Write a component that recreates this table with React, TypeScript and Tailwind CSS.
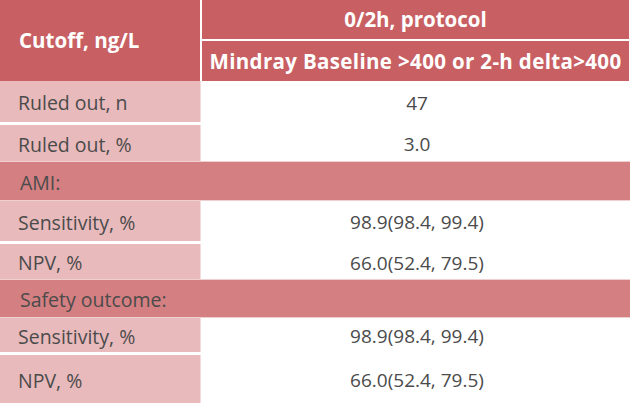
type Row =
  | { kind: "data"; label: string; value: string; h: string }
  | { kind: "band"; label: string; h: string }
  | { kind: "gap" };

const rows: Row[] = [
  { kind: "data", label: "Ruled out, n", value: "47", h: "h-[41px]" },
  { kind: "gap" },
  { kind: "data", label: "Ruled out, %", value: "3.0", h: "h-[36px]" },
  { kind: "band", label: "AMI:", h: "h-[40px]" },
  { kind: "data", label: "Sensitivity, %", value: "98.9(98.4, 99.4)", h: "h-[40px]" },
  { kind: "gap" },
  { kind: "data", label: "NPV, %", value: "66.0(52.4, 79.5)", h: "h-[35px]" },
  { kind: "band", label: "Safety outcome:", h: "h-[39px]" },
  { kind: "data", label: "Sensitivity, %", value: "98.9(98.4, 99.4)", h: "h-[34px]" },
  { kind: "gap" },
  { kind: "data", label: "NPV, %", value: "66.0(52.4, 79.5)", h: "h-[48px]" },
];

export default function App() {
  return (
    <div
      className="w-[630px] h-[403px] overflow-hidden bg-white text-[#4b4b4b] text-[19.5px]"
      style={{ fontFamily: '"Open Sans", "Noto Sans", sans-serif' }}
    >
      {/* header */}
      <div className="flex h-[81px] text-white font-bold text-[20.5px]">
        <div className="w-[200px] bg-[#c85f63] flex items-center pl-[19px]">
          Cutoff, ng/L
        </div>
        <div className="w-[2px] bg-white" />
        <div className="flex-1 flex flex-col mr-[1px]">
          <div className="h-[39px] bg-[#c85f63] flex items-center justify-center">
            0/2h, protocol
          </div>
          <div className="h-[2px] bg-white" />
          <div className="h-[40px] bg-[#c85f63] flex items-center justify-center tracking-[0.35px]">
            Mindray Baseline &gt;400 or 2-h delta&gt;400
          </div>
        </div>
      </div>

      {rows.map((r, i) => {
        if (r.kind === "gap")
          return (
            <div key={i} className="h-[3px] flex">
              <div className="w-[201px] bg-white" />
            </div>
          );
        if (r.kind === "band")
          return (
            <div
              key={i}
              className={`${r.h} bg-[#d47f81] border-y border-[#efcfd0] flex items-center pl-[20px] pt-[3px]`}
            >
              {r.label}
            </div>
          );
        return (
          <div key={i} className={`${r.h} flex`}>
            <div className="w-[201px] bg-[#e8babc] border-r border-[#f4dcdd] flex items-center pl-[18px] pt-[3px]">
              {r.label}
            </div>
            <div className="flex-1 flex items-center justify-center pl-[3px] pt-[3px] text-[19px]">
              {r.value}
            </div>
          </div>
        );
      })}
    </div>
  );
}
